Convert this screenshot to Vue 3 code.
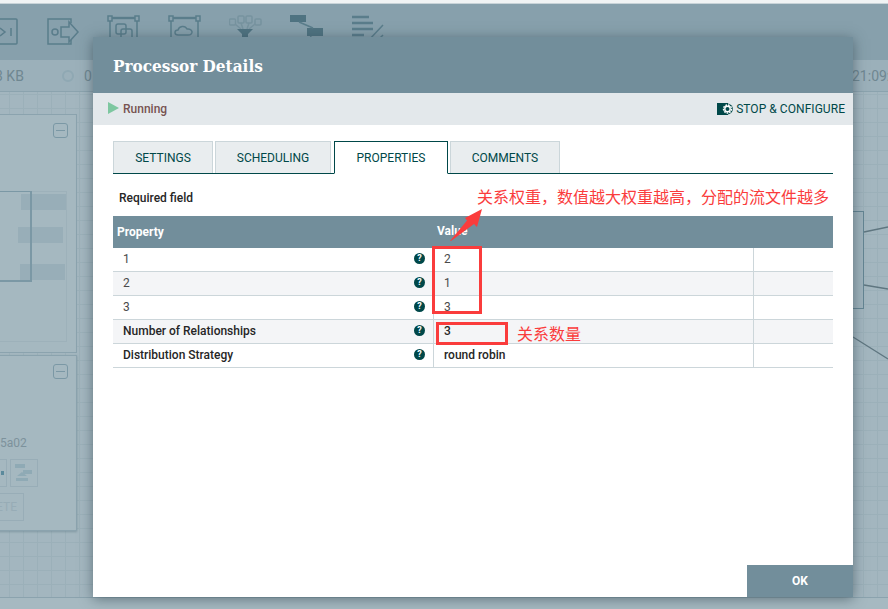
<template>
  <div class="page">
    <div class="top-line"></div>
    <div class="toolbar">
      <svg class="tool tool-low" style="left:-12px" width="30" height="28" viewBox="0 0 30 28"><rect x="1" y="1" width="28" height="25" rx="1"/><path d="M12 10l5 4-5 4M23 10v8"/></svg>
      <svg class="tool tool-low" style="left:47px" width="33" height="28" viewBox="0 0 33 28"><path d="M24 5V1H1v25h23v-4"/><circle cx="8" cy="14" r="3"/><path d="M14 9h8V4l9 10-9 10v-5h-8z"/></svg>
      <svg class="tool" style="left:107px" width="33" height="30" viewBox="0 0 33 30"><rect x="1" y="1" width="4" height="5"/><rect x="28" y="1" width="4" height="5"/><path d="M5 3h23" stroke-width="2.400"/><path d="M3 6v24M30 6v24"/><rect x="9" y="9" width="10" height="10" rx="2"/><rect x="14" y="14" width="11" height="11" rx="2"/></svg>
      <svg class="tool" style="left:168px" width="33" height="30" viewBox="0 0 33 30"><rect x="1" y="1" width="4" height="5"/><rect x="28" y="1" width="4" height="5"/><path d="M5 3h23" stroke-width="2.400"/><path d="M3 6v24M30 6v24"/><path d="M10 20c-4 0-4-5 0-5 1-4 7-5 9-1 6-1 7 6 1 6z"/></svg>
      <svg class="tool tool-soft" style="left:229px" width="33" height="30" viewBox="0 0 33 30"><rect x="0.500" y="4" width="6" height="6" rx="1"/><rect x="9" y="1" width="6" height="7" rx="1"/><rect x="17" y="1" width="6" height="7" rx="1"/><rect x="26" y="4" width="6" height="6" rx="1"/><path d="M6 9l6 5M12 8l2 6M20 8l-2 6M26 9l-6 5" /><path d="M8 14h16l-5 5v11h-6V19z" class="fill"/></svg>
      <svg class="tool" style="left:290px" width="33" height="30" viewBox="0 0 33 30"><rect x="0" y="0" width="16" height="7" class="fill"/><rect x="17" y="13" width="16" height="8" class="fill"/><path d="M9 7l14 6M21 21l-2 6"/></svg>
      <svg class="tool" style="left:351px" width="33" height="30" viewBox="0 0 33 30"><path d="M1 2h17M1 8h21M1 14h21M1 20h12" stroke-width="2.400"/><path d="M17 26L32 10M26 26l6-6"/></svg>
    </div>
    <div class="stats">
      <span class="stat stat-kb">3 KB</span>
      <span class="target"></span>
      <span class="stat stat-zero">0</span>
      <span class="stat stat-time">21:09:</span>
    </div>
    <div class="canvas">
      <div class="node node-one">
        <div class="collapse"></div>
        <div class="inner">
          <div class="bar bar-a"></div>
          <div class="bar bar-b"></div>
          <div class="bar bar-c"></div>
        </div>
        <div class="selected"></div>
      </div>
      <div class="node node-two">
        <div class="collapse"></div>
        <span class="node-id">5a02</span>
        <div class="mini mini-a"></div>
        <div class="mini mini-b">
          <svg width="22" height="22" viewBox="0 0 22 22"><path d="M2 2h10v4H2zM10 8h9v4h-9zM4 14l5-4 5 4zM3 16h12v3H3z" fill="#8faab5"/></svg>
        </div>
        <div class="delete">ETE</div>
      </div>
      <div class="node-right"></div>
      <svg class="links" width="888" height="517" viewBox="0 0 888 517">
        <path d="M864 140l24-5M864 193l24 4M853 245l35 22" fill="none" stroke="#5f7680" stroke-width="1.300"/>
      </svg>
    </div>
    <div class="footer"></div>

    <div class="dialog">
      <div class="dialog-header">Processor Details</div>
      <div class="status-bar">
        <div class="status">
          <span class="play"></span>
          <span>Running</span>
        </div>
        <div class="stop">
          <svg width="17" height="14" viewBox="0 0 17 14">
            <rect x="0" y="1" width="11" height="12" fill="#004849"/>
            <circle cx="10.500" cy="7" r="5.400" fill="#004849"/>
            <circle cx="10.500" cy="7" r="4" fill="none" stroke="#fff" stroke-width="1.400" stroke-dasharray="1.700 1"/>
            <circle cx="10.500" cy="7" r="2.700" fill="none" stroke="#fff" stroke-width="1.400"/>
          </svg>
          <span>STOP &amp; CONFIGURE</span>
        </div>
      </div>
      <div class="dialog-body">
        <div class="tabs">
          <div
            v-for="tab in tabs"
            :key="tab.name"
            class="tab"
            :class="{ active: tab.name === 'PROPERTIES' }"
            :style="{ width: tab.width + 'px' }"
          >{{ tab.name }}</div>
        </div>
        <div class="required">Required field</div>
        <div class="table">
          <div class="row head">
            <div class="cell-name">Property</div>
            <div class="cell-value">Value</div>
          </div>
          <div
            v-for="(row, i) in rows"
            :key="row.name"
            class="row"
            :class="{ odd: i % 2 === 1, bold: row.required }"
          >
            <div class="cell-name">
              <span>{{ row.name }}</span>
              <span class="help">?</span>
            </div>
            <div class="cell-value">{{ row.value }}</div>
            <div class="cell-extra"></div>
          </div>
        </div>
        <div class="spacer"></div>
      </div>
      <div class="dialog-footer">
        <div class="ok">OK</div>
      </div>
    </div>

    <div class="mark mark-big"></div>
    <div class="mark mark-small"></div>
    <svg class="arrow" width="34" height="34" viewBox="0 0 34 34">
      <path d="M0 32L17 11.500l-2-2.500L32 0l-5 18-3-3L1 32z" fill="#fa3c3c"/>
    </svg>
    <div class="note note-one">关系权重，数值越大权重越高，分配的流文件越多</div>
    <div class="note note-two">关系数量</div>
  </div>
</template>

<script setup>
const tabs = [
  { name: 'SETTINGS', width: 100 },
  { name: 'SCHEDULING', width: 116 },
  { name: 'PROPERTIES', width: 114 },
  { name: 'COMMENTS', width: 110 }
]

const rows = [
  { name: '1', value: '2' },
  { name: '2', value: '1' },
  { name: '3', value: '3' },
  { name: 'Number of Relationships', value: '3', required: true },
  { name: 'Distribution Strategy', value: 'round robin', required: true }
]
</script>

<style>
html, body {
  margin: 0;
  overflow: hidden;
}
</style>

<style scoped>
.page {
  position: relative;
  width: 888px;
  height: 609px;
  overflow: hidden;
  display: flex;
  flex-direction: column;
  background: #a3b6bf;
  font-family: Roboto, "Noto Sans CJK SC", sans-serif;
}

.top-line {
  background: #f0f3f4;
  border-bottom: 1px solid #c8d3d8;
  box-sizing: border-box;
  flex: none;
  height: 4px;
}

.toolbar {
  position: relative;
  height: 56px;
  flex: none;
  background: #87a0ac;
}

.tool {
  position: absolute;
  top: 11px;
  fill: none;
  stroke: #5a7d8b;
  stroke-width: 1.500;
}

.tool-low {
  top: 14px;
}

.tool .fill {
  fill: #4f7381;
  stroke: none;
}

.tool-soft {
  stroke: #77939f;
}

.stats {
  position: relative;
  height: 32px;
  flex: none;
  background: #9bb0ba;
  border-bottom: 1px solid #8ba3ae;
  box-sizing: border-box;
  color: #6f8791;
  font-size: 14px;
}

.stat {
  position: absolute;
  top: 8px;
}

.stat-kb {
  left: -5px;
}

.stat-zero {
  left: 84px;
}

.stat-time {
  left: 852px;
}

.target {
  position: absolute;
  left: 62px;
  top: 10px;
  width: 8px;
  height: 8px;
  border: 2px solid #8fa8b3;
  border-radius: 50%;
  background: #9bb0ba;
}

.canvas {
  position: relative;
  flex: 1;
  background-color: #a3b6bf;
  background-image:
    linear-gradient(#9bb0b9 1px, transparent 1px),
    linear-gradient(90deg, #9bb0b9 1px, transparent 1px);
  background-size: 14px 14px;
  background-position: 9px 2px;
}

.node {
  position: absolute;
  left: -10px;
  width: 87px;
  box-sizing: border-box;
  background: #a5b8c0;
  border: 1px solid #8ba3ae;
}

.node-one {
  top: 22px;
  height: 239px;
}

.node-two {
  top: 263px;
  height: 176px;
  box-shadow: 0 1px 2px rgba(80, 110, 122, 0.4);
}

.collapse {
  position: absolute;
  left: 62px;
  top: 8px;
  width: 13px;
  height: 13px;
  border: 1px solid #7b98a5;
  border-radius: 3px;
}

.collapse::after {
  content: "";
  position: absolute;
  left: 2px;
  right: 2px;
  top: 6px;
  height: 1px;
  background: #7b98a5;
}

.inner {
  position: absolute;
  left: -1px;
  top: 76px;
  width: 77px;
  height: 151px;
  box-sizing: border-box;
  border: 1px solid #9db1ba;
}

.bar {
  position: absolute;
  height: 16px;
  width: 45px;
  background: #98aeb8;
}

.bar-a {
  left: 30px;
  top: 2px;
}

.bar-b {
  left: 27px;
  top: 35px;
}

.bar-c {
  left: 29px;
  top: 72px;
}

.selected {
  position: absolute;
  left: -1px;
  top: 76px;
  width: 42px;
  height: 91px;
  box-sizing: border-box;
  border: 1px solid #7b98a5;
  border-width: 1px 2px 2px 1px;
}

.node-id {
  position: absolute;
  left: 9px;
  top: 80px;
  font-size: 12px;
  color: #7d929c;
}

.mini {
  position: absolute;
  top: 103px;
  box-sizing: border-box;
  height: 28px;
  border: 1px solid #98adb7;
}

.mini-a {
  left: -2px;
  width: 18px;
}

.mini-a::after {
  content: "";
  position: absolute;
  right: 2px;
  top: 11px;
  width: 3px;
  height: 4px;
  background: #5b8a9c;
}

.mini-b {
  left: 19px;
  width: 28px;
  padding: 2px;
}

.delete {
  position: absolute;
  left: -2px;
  top: 137px;
  width: 35px;
  height: 28px;
  box-sizing: border-box;
  border: 1px solid #98adb7;
  color: #97acb6;
  font-size: 12px;
  line-height: 26px;
  text-align: right;
  padding-right: 6px;
}

.node-right {
  position: absolute;
  left: 840px;
  top: 119px;
  width: 24px;
  height: 98px;
  box-sizing: border-box;
  border: 1px solid #648593;
  background: #9fb3bc;
}

.links {
  position: absolute;
  left: 0;
  top: 0;
}

.footer {
  flex: none;
  height: 12px;
  background: #a6b9c1;
  border-top: 1px solid #8ba3ae;
  box-sizing: border-box;
}

.dialog {
  position: absolute;
  left: 93px;
  top: 37px;
  width: 760px;
  height: 560px;
  display: flex;
  flex-direction: column;
  background: #fff;
  box-shadow: 0 2px 12px rgba(40, 60, 70, 0.55);
}

.dialog-header {
  height: 56px;
  flex: none;
  box-sizing: border-box;
  padding: 18px 20px 0;
  background: #728e9b;
  color: #fff;
  font-family: "DejaVu Serif Condensed", "DejaVu Serif", "Liberation Serif", serif;
  font-weight: 700;
  font-size: 17px;
  line-height: 22px;
}

.status-bar {
  height: 32px;
  flex: none;
  display: flex;
  align-items: center;
  justify-content: space-between;
  padding: 0 8px 0 15px;
  background: #e3e8eb;
}

.status {
  display: flex;
  align-items: center;
  gap: 4px;
  color: #775351;
  font-size: 12px;
  font-weight: 500;
}

.play {
  width: 0;
  height: 0;
  border-left: 11px solid #7dc7a0;
  border-top: 6px solid transparent;
  border-bottom: 6px solid transparent;
  margin-top: -2px;
}

.stop {
  display: flex;
  align-items: center;
  gap: 2px;
  color: #004849;
  font-size: 12px;
  letter-spacing: 0.05px;
}

.dialog-body {
  flex: 1;
  display: flex;
  flex-direction: column;
  padding: 16px 20px 0;
}

.tabs {
  display: flex;
  gap: 2px;
  height: 33px;
  flex: none;
  box-sizing: border-box;
  border-bottom: 1px solid #004849;
}

.tab {
  box-sizing: border-box;
  height: 32px;
  background: #e9edef;
  border: 1px solid #cbd6da;
  border-bottom: none;
  color: #004849;
  font-size: 12px;
  line-height: 33px;
  text-align: center;
}

.tab.active {
  height: 33px;
  background: #fff;
  border: 1px solid #004849;
  border-bottom: 1px solid #fff;
  margin-left: 1px;
}

.required {
  height: 42px;
  flex: none;
  box-sizing: border-box;
  padding: 17px 0 0 6px;
  color: #262626;
  font-size: 12px;
  font-weight: 500;
  line-height: 14px;
}

.table {
  flex: none;
}

.row {
  display: flex;
  height: 24px;
  box-sizing: border-box;
  border-bottom: 1px solid #ccd6da;
  color: #4a4a4a;
  font-size: 12px;
  line-height: 23px;
}

.row.odd {
  background: #f4f5f7;
}

.row.bold {
  color: #262626;
  font-weight: 500;
}

.row.head {
  height: 32px;
  background: #728e9b;
  border-bottom: none;
  color: #fff;
  font-weight: 700;
  line-height: 31px;
}

.cell-name {
  width: 321px;
  flex: none;
  box-sizing: border-box;
  display: flex;
  justify-content: space-between;
  align-items: center;
  padding: 0 8px 0 10px;
  border-right: 1px solid #ccd6da;
}

.head .cell-name {
  padding-left: 4px;
  border-right: none;
}

.cell-value {
  width: 320px;
  flex: none;
  box-sizing: border-box;
  padding-left: 10px;
  border-right: 1px solid #ccd6da;
}

.head .cell-value {
  padding-left: 3px;
  border-right: none;
}

.help {
  width: 11px;
  height: 11px;
  margin-top: -2px;
  border-radius: 50%;
  background: #004849;
  color: #fff;
  font-size: 9px;
  font-weight: 700;
  line-height: 11px;
  text-align: center;
}

.spacer {
  flex: 1;
}

.dialog-footer {
  height: 32px;
  flex: none;
  display: flex;
  justify-content: flex-end;
}

.ok {
  width: 106px;
  background: #728e9b;
  color: #fff;
  font-size: 12px;
  font-weight: 700;
  line-height: 32px;
  text-align: center;
}

.mark {
  position: absolute;
  box-sizing: border-box;
  border: 3px solid #fa3c3c;
}

.mark-big {
  left: 432px;
  top: 246px;
  width: 50px;
  height: 68px;
}

.mark-small {
  left: 436px;
  top: 322px;
  width: 72px;
  height: 23px;
}

.arrow {
  position: absolute;
  left: 450px;
  top: 209px;
}

.note {
  position: absolute;
  color: #fa3c3c;
  font-family: "Noto Sans CJK SC", sans-serif;
  font-size: 16px;
  line-height: 20px;
  white-space: nowrap;
}

.note-one {
  left: 477px;
  top: 186px;
}

.note-two {
  left: 517px;
  top: 323px;
}
</style>
